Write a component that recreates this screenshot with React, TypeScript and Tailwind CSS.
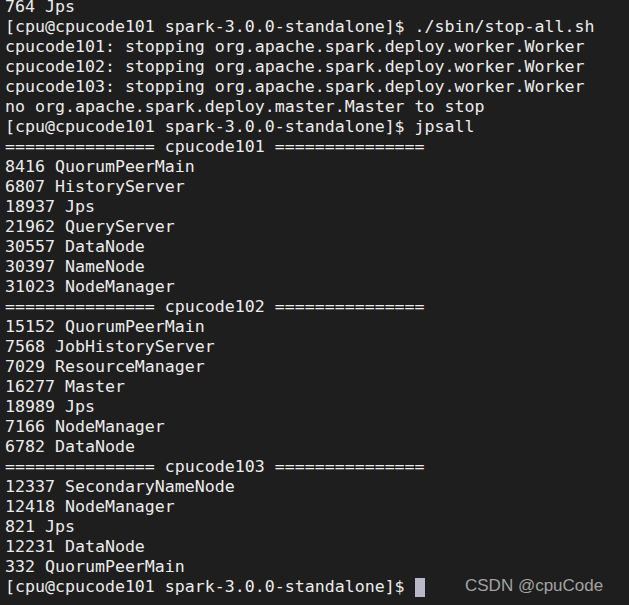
const lines = [
  "764 Jps",
  "[cpu@cpucode101 spark-3.0.0-standalone]$ ./sbin/stop-all.sh",
  "cpucode101: stopping org.apache.spark.deploy.worker.Worker",
  "cpucode102: stopping org.apache.spark.deploy.worker.Worker",
  "cpucode103: stopping org.apache.spark.deploy.worker.Worker",
  "no org.apache.spark.deploy.master.Master to stop",
  "[cpu@cpucode101 spark-3.0.0-standalone]$ jpsall",
  "=============== cpucode101 ===============",
  "8416 QuorumPeerMain",
  "6807 HistoryServer",
  "18937 Jps",
  "21962 QueryServer",
  "30557 DataNode",
  "30397 NameNode",
  "31023 NodeManager",
  "=============== cpucode102 ===============",
  "15152 QuorumPeerMain",
  "7568 JobHistoryServer",
  "7029 ResourceManager",
  "16277 Master",
  "18989 Jps",
  "7166 NodeManager",
  "6782 DataNode",
  "=============== cpucode103 ===============",
  "12337 SecondaryNameNode",
  "12418 NodeManager",
  "821 Jps",
  "12231 DataNode",
  "332 QuorumPeerMain",
];

export default function App() {
  return (
    <div className="w-[629px] h-[605px] overflow-hidden bg-[#1e1e1e] relative">
      {/* terminal output */}
      <div className="-mt-[3px] pl-[5px] font-['DejaVu_Sans_Mono',monospace] text-[16.6px] leading-[20px] text-[#ececec] whitespace-pre">
        {lines.map((l, i) => (
          <div key={i} className="h-[20px]">
            {l}
          </div>
        ))}
        <div className="h-[20px] flex items-center">
          <span>[cpu@cpucode101 spark-3.0.0-standalone]$ </span>
          <span className="inline-block w-[10px] h-[19px] bg-[#b8b8c8]" />
        </div>
      </div>

      {/* watermark */}
      <div className="absolute left-[465px] top-[573px] font-['Liberation_Sans',sans-serif] text-[17px] text-[#a3a3a3]">
        CSDN @cpuCode
      </div>
    </div>
  );
}
